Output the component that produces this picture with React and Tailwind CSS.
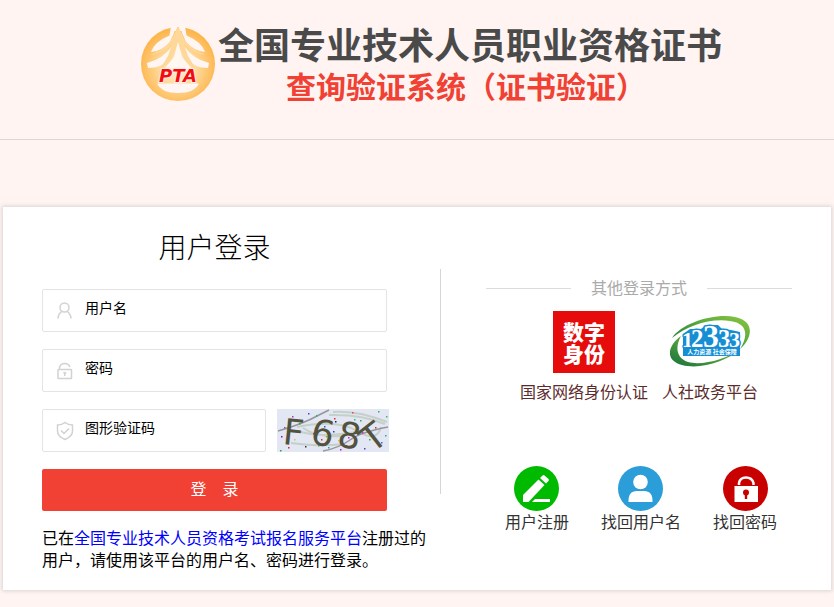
const accountLinks = [
  { label: '用户注册', Icon: RegisterIcon },
  { label: '找回用户名', Icon: FindUserIcon },
  { label: '找回密码', Icon: FindPasswordIcon },
]

const captchaDots = [
  [4, 27, '#a0a'], [11, 38, '#d22'], [22, 14, '#2a4'], [28, 37, '#333'], [31, 4, '#44c'],
  [36, 24, '#a3a'], [39, 6, '#2b6'], [44, 30, '#d33'], [47, 17, '#35c'], [51, 38, '#2a8'],
  [57, 9, '#e22'], [58, 12, '#222'], [56, 22, '#33c'], [61, 31, '#cc3'], [66, 20, '#2a9'],
  [71, 28, '#c2c'], [75, 3, '#e44'], [77, 10, '#2c6'], [83, 11, '#3a5'], [87, 39, '#44c'],
  [92, 30, '#2a6'], [98, 18, '#c33'], [101, 2, '#2b4'], [104, 33, '#55d'], [108, 26, '#2aa'],
  [17, 30, '#cc4'], [15, 7, '#b3b'], [3, 41, '#2a4'], [41, 36, '#3a9'], [63, 40, '#a2c'],
  [85, 23, '#d3a'], [109, 7, '#3b7'], [49, 27, '#4c4'], [7, 18, '#56c'], [69, 36, '#e33'],
]

function Emblem() {
  return (
    <svg className="h-19 w-19 shrink-0" viewBox="0 0 76 76" aria-label="PTA" role="img">
      <defs>
        <radialGradient id="gold" cx="50%" cy="55%" r="52%">
          <stop offset="0" stopColor="#fff0d8" />
          <stop offset="0.5" stopColor="#fed898" />
          <stop offset="1" stopColor="#fdb64e" />
        </radialGradient>
      </defs>
      <circle cx="38" cy="38" r="37" fill="url(#gold)" />
      <g fill="#fff5f2">
        {/* notch beside the spire */}
        <path d="M31 0 L33.5 5 L36 5 L38 0 L40 5 L42.500 5 L45 0 Z" />
        <path d="M31 0 H36 L34 7 L30 16 Q22 25 11 26 Q14 16 29.500 9.500 Z" />
        <path d="M45 0 H40 L42 7 L46 16 Q54 25 65 26 Q62 16 46.500 9.500 Z" />
        <path d="M32 20 Q23 33 7 37 L8 42 Q22 42 29 33 Z" />
        <path d="M44 20 Q53 33 69 37 L68 42 Q54 42 47 33 Z" />
        <path d="M17 57.500 H59 Q54 67 38 67 Q22 67 17 57.500 Z" />
      </g>
      <path d="M34.500 7 Q30 19 20 24.500 Q14 27.500 10 29 Q24 27 32 18 L28 30 L20 43 L31 36 L38 14 L45 36 L56 43 L48 30 L44 18 Q52 27 66 29 Q62 27.500 56 24.500 Q46 19 41.500 7 L38 1 Z" fill="#fed898" />
      <path d="M38 15 L34 31 L24 43 H52 L42 31 Z" fill="#fff7f0" />
      <text x="38" y="55.500" textAnchor="middle" className="font-['DejaVu_Sans'] text-[18px] font-bold italic" fill="#f20d12" stroke="#fff0e4" strokeWidth="2" paintOrder="stroke">PTA</text>
    </svg>
  )
}

function UserIcon() {
  return (
    <svg className="h-5 w-5" viewBox="0 0 20 20" fill="none" stroke="#d2d2d2" strokeWidth="1.500" aria-hidden="true">
      <circle cx="9.500" cy="6.500" r="4.500" />
      <path d="M3 17.500 Q3 13.500 6.500 10.500 M12.500 10.500 Q16 13.500 16 17.500" />
    </svg>
  )
}

function LockIcon() {
  return (
    <svg className="h-5 w-5" viewBox="0 0 20 20" fill="none" stroke="#d2d2d2" strokeWidth="1.500" aria-hidden="true">
      <rect x="3" y="8.500" width="13.500" height="9" rx="0.500" />
      <path d="M4.500 8 V6.500 Q5.500 2.500 9.750 2.500 Q13.500 2.500 15 6" />
      <path d="M8.250 11.750 H11.250 M9.750 11.500 V15" />
    </svg>
  )
}

function ShieldIcon() {
  return (
    <svg className="h-5 w-5" viewBox="0 0 20 20" fill="none" stroke="#d2d2d2" strokeWidth="1.500" aria-hidden="true">
      <path d="M10 1.500 Q13 4 17.500 4 V10 Q17.500 15.500 10 18.500 Q2.500 15.500 2.500 10 V4 Q7 4 10 1.500 Z" />
      <path d="M6 9.500 L9 12.500 L14 7.500" />
    </svg>
  )
}

function Captcha() {
  return (
    <svg className="block h-[43px] w-28" viewBox="0 0 112 43" role="img" aria-label="F68T">
      <rect width="112" height="43" fill="#e3e6f3" />
      <g fill="none" stroke="#c5d0c9" strokeWidth="2">
        <path d="M56 3 Q80 1 110 13 M52 6 Q84 5 108 15 M20 18 Q60 10 80 22 T104 18 M24 23 Q50 30 92 20 M14 34 Q44 38 66 35 M26 19 Q40 29 68 27" />
      </g>
      <path d="M1 22 Q26 15 42 6 L52 1 M46 42 Q62 39 73 31 T111 18" fill="none" stroke="#96969e" strokeWidth="1.500" />
      {captchaDots.map(([x, y, color]) => (
        <rect key={`${x}-${y}`} x={x} y={y} width="1.500" height="1.500" fill={color} />
      ))}
      <g fill="#52523e" className="font-['DejaVu_Sans'] text-[36px] font-normal">
        <text transform="translate(5 35) rotate(6)">F</text>
        <text transform="translate(32 34) rotate(12)">6</text>
        <text transform="translate(59 37) rotate(10)">8</text>
        <text transform="translate(104 38) rotate(-38)" textAnchor="middle">T</text>
      </g>
    </svg>
  )
}

function Logo12333() {
  return (
    <svg className="h-[62px] w-20" viewBox="0 0 80 62" aria-hidden="true">
      <defs>
        <linearGradient id="ring" x1="0" y1="1" x2="1" y2="0">
          <stop offset="0" stopColor="#17703c" />
          <stop offset="0.6" stopColor="#5cab3e" />
          <stop offset="1" stopColor="#8cc63f" />
        </linearGradient>
      </defs>
      <path d="M2 27 C12 12 44 2 65 6 C86 10 82 28 70 38 C79 24 77 12 60 10 C40 7 17 15 2 27 Z" fill="url(#ring)" />
      <path d="M11 25 C-4 36 -4 50 12 54 C31 59 56 50 70 39 C56 48 32 55 18 51 C6 47 5 36 11 25 Z" fill="url(#ring)" />
      <path d="M13 23 L20 18 L31 18 L36 14 H48 L52 18 L61 19 L70 21 V45 H13 Z" fill="#168ed4" />
      <g className="font-['Liberation_Serif'] font-bold" fill="#fff" stroke="#168ed4" strokeWidth="3" strokeLinejoin="round" paintOrder="stroke">
        <text x="12" y="36" className="text-[22px]">1</text>
        <text x="21" y="36" className="text-[25px]">2</text>
        <text x="33" y="36" className="text-[32px]">3</text>
        <text x="48" y="36" className="text-[25px]">3</text>
        <text x="59" y="36" className="text-[22px]">3</text>
      </g>
      <text x="42" y="43" textAnchor="middle" fill="#fff" className="font-['Noto_Sans_CJK_SC'] text-[6px] font-bold">人力资源 社会保障</text>
    </svg>
  )
}

function RegisterIcon() {
  return (
    <svg className="h-[45px] w-[45px]" viewBox="0 0 45 45" aria-hidden="true">
      <circle cx="22.500" cy="22.500" r="22.500" fill="#00ba00" />
      <g fill="#fff">
        <path d="M9 36 V29 L24.500 13.500 L30.500 19 L14.500 36 Z" />
        <path d="M26 12 L28.500 9.500 Q29.500 8.500 30.500 9.500 L34.500 13 Q35.300 14 34.500 15 L32 17.500 Z" />
        <path d="M18 36 L21 33 H36 V36 Z" />
      </g>
    </svg>
  )
}

function FindUserIcon() {
  return (
    <svg className="h-[45px] w-[45px]" viewBox="0 0 45 45" aria-hidden="true">
      <circle cx="22.500" cy="22.500" r="22.500" fill="#2b9dd8" />
      <circle cx="22.500" cy="16" r="7.300" fill="#fff" />
      <path d="M10.500 36 Q10 25 19 25 H26 Q35 25 34.500 36 Z" fill="#fff" />
    </svg>
  )
}

function FindPasswordIcon() {
  return (
    <svg className="h-[45px] w-[45px]" viewBox="0 0 45 45" aria-hidden="true">
      <circle cx="22.500" cy="22.500" r="22.500" fill="#c90000" />
      <path d="M16 19 V17 Q17 11.500 23 11.500 Q29 11.500 30.500 17 V19" fill="none" stroke="#fff" strokeWidth="2.500" />
      <rect x="11.500" y="20" width="23.500" height="16" fill="#fff" />
      <circle cx="23" cy="26.500" r="3" fill="#c90000" />
      <path d="M21.800 27 H24.200 V33 H21.800 Z" fill="#c90000" />
    </svg>
  )
}

function Field({ id, label, type = 'text', icon, className = '' }) {
  return (
    <div className={`flex h-[43px] items-center rounded-xs border border-[#e4e4e4] pl-3 ${className}`}>
      <label htmlFor={id} aria-label={label} className="shrink-0">{icon}</label>
      <input
        id={id}
        type={type}
        placeholder={label}
        className="ml-2.5 h-8.5 min-w-0 flex-1 self-start text-sm outline-none placeholder:text-black"
      />
    </div>
  )
}

export default function App() {
  return (
    <div className="min-h-screen bg-[#fff4f1] pb-4 font-['Noto_Sans_CJK_SC',sans-serif] text-black">
      <header className="flex h-35 items-start justify-center gap-0.5 border-b border-[#dcd6d5] pt-[26px] pl-7">
        <Emblem />
        <h1 className="text-center font-bold">
          <span className="block text-[36px] leading-[34px] text-[#4a4a4a]">全国专业技术人员职业资格证书</span>
          <span className="block pr-2 text-[30px] leading-[50px] text-[#f04134]">查询验证系统（证书验证）</span>
        </h1>
      </header>

      <main className="mx-[3px] mt-[67px] flex bg-white pb-5 shadow-[0_0_4px_1px_#d8d4d3]">
        <section className="w-[437px] shrink-0 pt-[18px] pr-3 pl-[39px]">
          <form className="w-[345px]" onSubmit={(e) => e.preventDefault()}>
            <h2 className="mb-[22px] text-center text-[28px] leading-[42px] font-light">用户登录</h2>
            <div className="space-y-[17px]">
              <Field id="username" label="用户名" icon={<UserIcon />} />
              <Field id="password" label="密码" type="password" icon={<LockIcon />} />
              <div className="-mr-0.5 flex justify-between">
                <Field id="captcha" label="图形验证码" icon={<ShieldIcon />} className="w-56" />
                <Captcha />
              </div>
              <button type="submit" className="h-[42px] w-full rounded-xs bg-[#f04134] pb-1 text-base text-white">
                登　录
              </button>
            </div>
          </form>
          <p className="mt-[15px] text-base leading-[22px]">
            已在<a href="#platform" className="text-[#0000ff]">全国专业技术人员资格考试报名服务平台</a>注册过的用户，请使用该平台的用户名、密码进行登录。
          </p>
        </section>

        <div className="mt-[62px] h-[225px] w-px shrink-0 bg-[#d6d6d6]" />

        <section className="min-w-0 flex-1 pt-[68px] pr-[39px] pl-[45px]">
          <div className="flex items-center gap-5 text-base leading-6 text-[#aaa]">
            <span className="h-px flex-1 bg-[#dcdcdc]" />
            <h2 className="pb-0.5">其他登录方式</h2>
            <span className="h-px flex-1 bg-[#dcdcdc]" />
          </div>
          <div className="mt-2.5 flex justify-center gap-3.5 text-base leading-6 whitespace-nowrap text-[#5c2c2c]">
            <a href="#identity" className="flex flex-col items-center gap-1.5">
              <span className="flex h-[62px] w-[62px] flex-col items-center justify-center bg-[#e60c0c] text-[21px] leading-[22px] font-black text-white" aria-hidden="true">
                <span>数字</span>
                <span>身份</span>
              </span>
              国家网络身份认证
            </a>
            <a href="#12333" className="flex flex-col items-center gap-1.5">
              <Logo12333 />
              人社政务平台
            </a>
          </div>
          <nav className="mt-[63px] flex justify-center gap-8 pl-1 text-base leading-5 whitespace-nowrap text-[#333]">
            {accountLinks.map(({ label, Icon }) => (
              <a key={label} href="#account" className="flex flex-col items-center">
                <Icon />
                {label}
              </a>
            ))}
          </nav>
        </section>
      </main>
    </div>
  )
}
